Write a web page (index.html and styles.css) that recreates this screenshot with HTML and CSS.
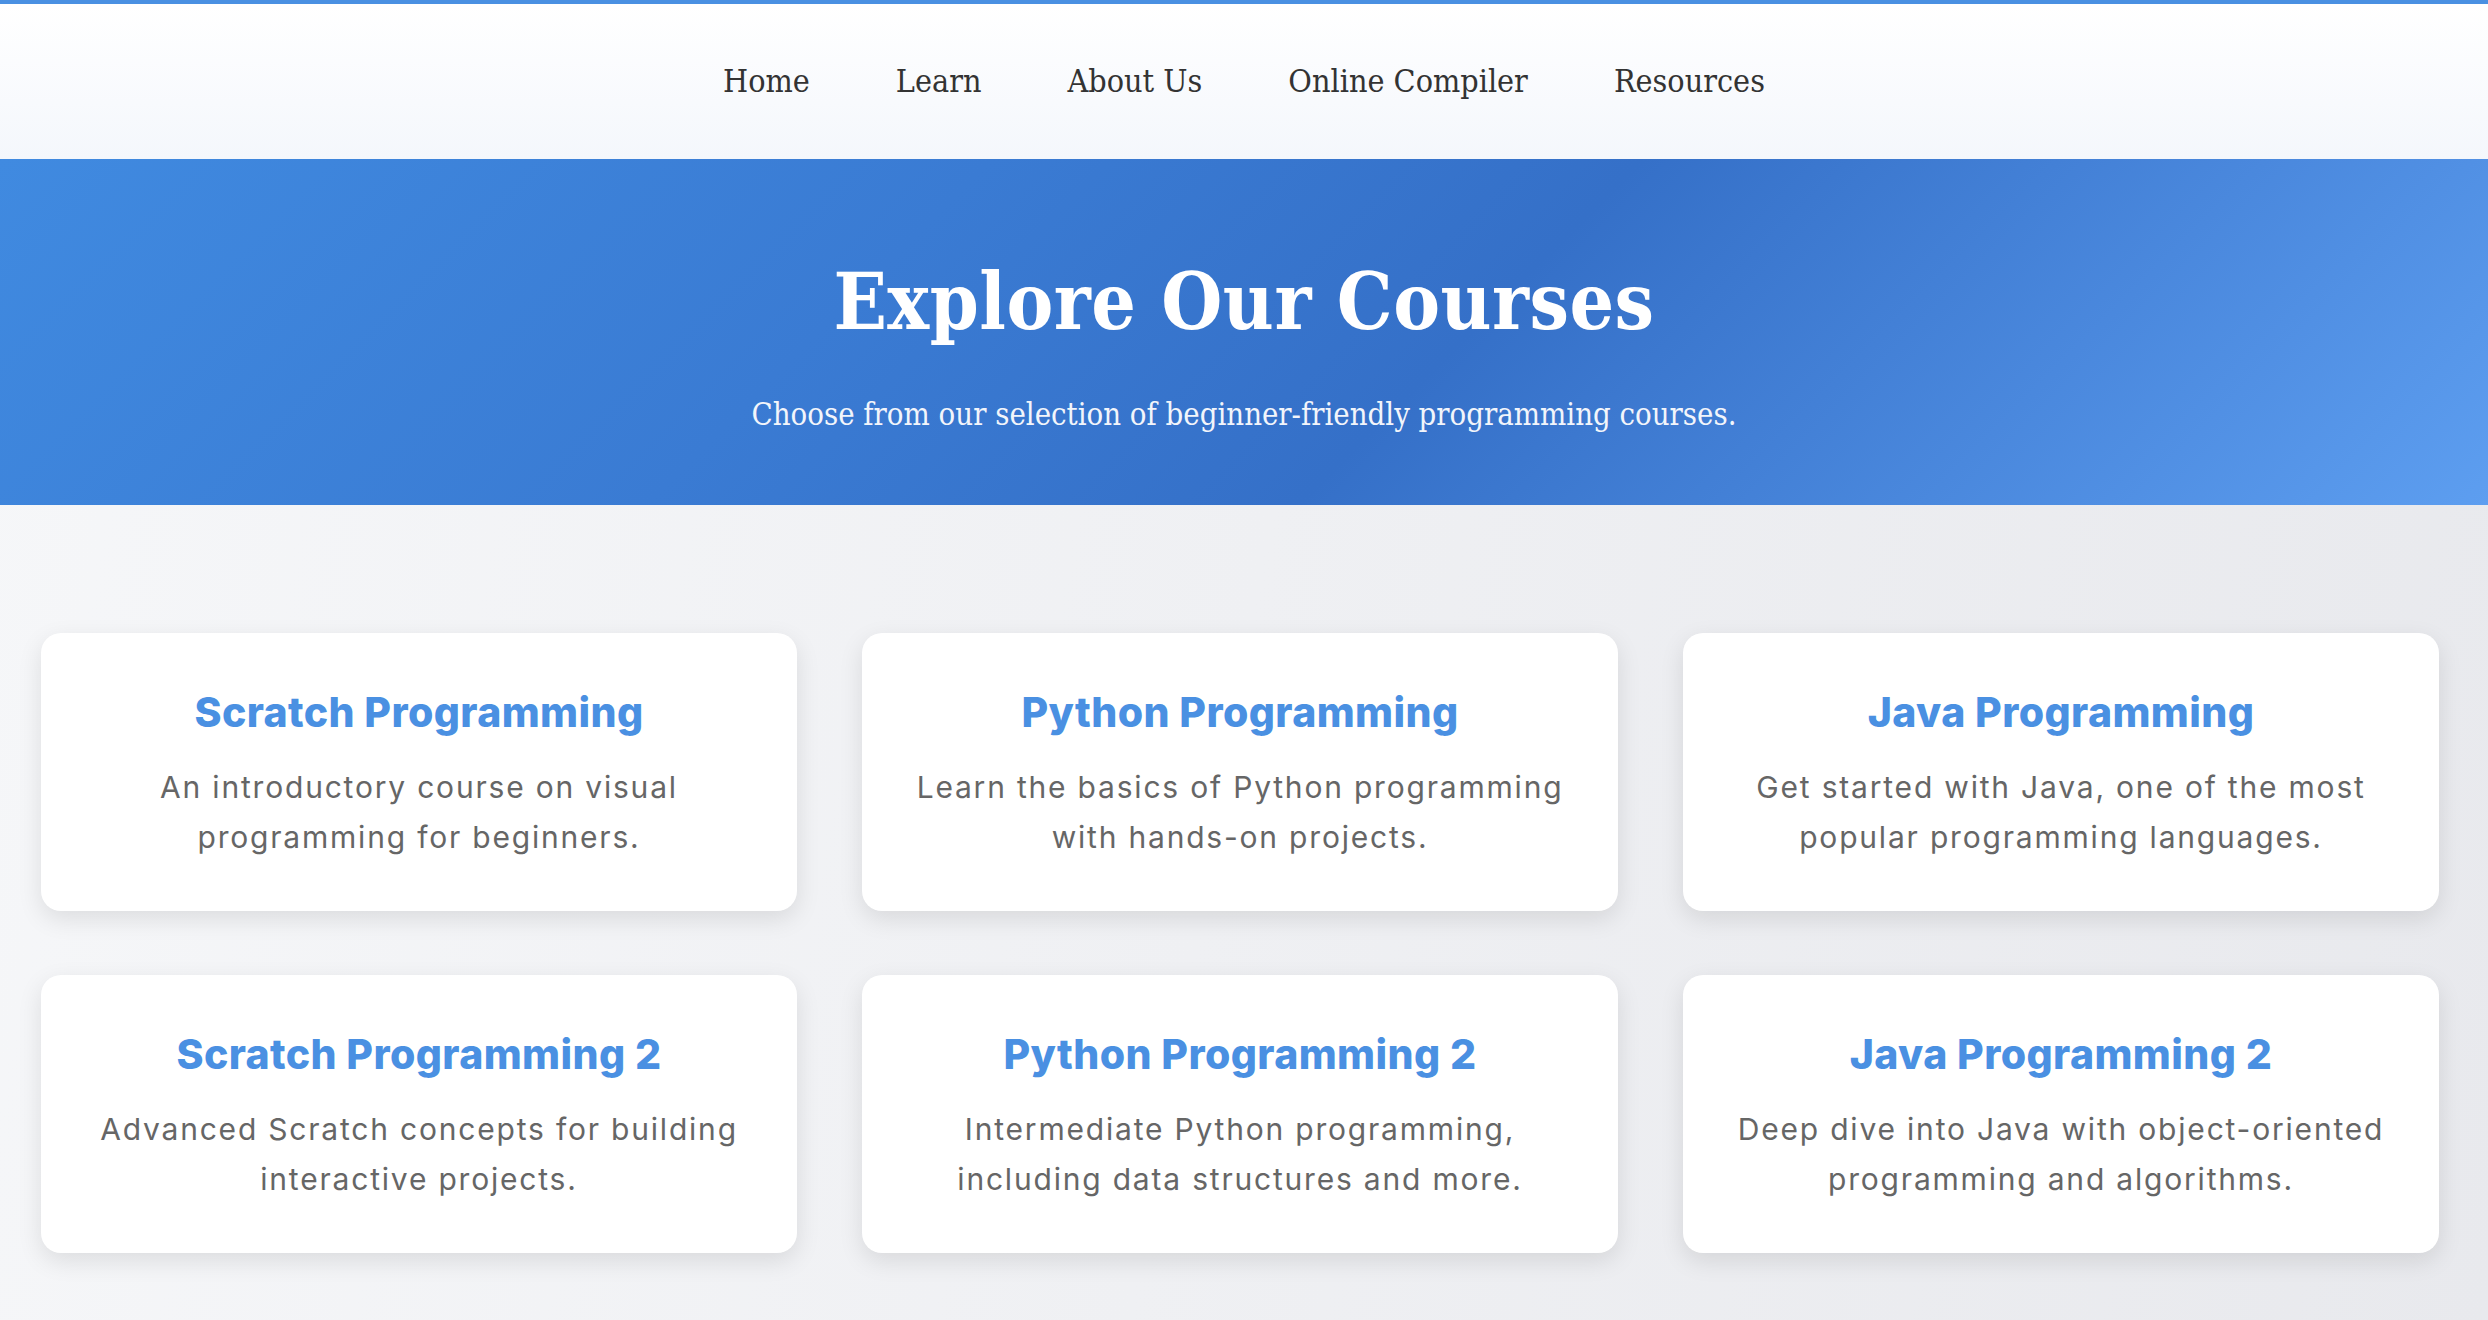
FILE: index.html
```html
<!DOCTYPE html>
<html lang="en">
<head>
<meta charset="utf-8">
<title>Explore Our Courses</title>
<link rel="stylesheet" href="styles.css">
</head>
<body>
<header class="site-header">
  <nav class="nav">
    <a class="nav-link" href="#">Home</a>
    <a class="nav-link" href="#">Learn</a>
    <a class="nav-link" href="#">About Us</a>
    <a class="nav-link" href="#">Online Compiler</a>
    <a class="nav-link" href="#">Resources</a>
  </nav>
</header>
<section class="hero">
  <h1 class="hero-title">Explore Our Courses</h1>
  <p class="hero-sub">Choose from our selection of beginner-friendly programming courses.</p>
</section>
<main class="courses">
  <div class="grid">
    <div class="card">
      <h2 class="card-title">Scratch Programming</h2>
      <p class="card-text">An introductory course on visual programming for beginners.</p>
    </div>
    <div class="card">
      <h2 class="card-title">Python Programming</h2>
      <p class="card-text">Learn the basics of Python programming with hands-on projects.</p>
    </div>
    <div class="card">
      <h2 class="card-title">Java Programming</h2>
      <p class="card-text">Get started with Java, one of the most popular programming languages.</p>
    </div>
    <div class="card">
      <h2 class="card-title">Scratch Programming 2</h2>
      <p class="card-text">Advanced Scratch concepts for building interactive projects.</p>
    </div>
    <div class="card">
      <h2 class="card-title">Python Programming 2</h2>
      <p class="card-text">Intermediate Python programming, including data structures and more.</p>
    </div>
    <div class="card">
      <h2 class="card-title">Java Programming 2</h2>
      <p class="card-text">Deep dive into Java with object-oriented programming and algorithms.</p>
    </div>
  </div>
</main>
</body>
</html>
```
FILE: styles.css
```css
html, body {
  margin: 0;
  padding: 0;
}
body {
  font-family: "DejaVu Serif Condensed", "DejaVu Serif", serif;
  font-stretch: condensed;
  background: linear-gradient(100deg, #f6f7f9, #e8e9ed);
  min-height: 1320px;
}
.site-header {
  border-top: 4px solid #4a90e2;
  background: linear-gradient(180deg, #ffffff 0%, #f4f7fc 100%);
  padding: 57px 0 58px;
}
.nav {
  display: flex;
  justify-content: center;
  gap: 86px;
  line-height: 40px;
}
.nav-link {
  font-size: 32px;
  color: #333333;
  text-decoration: none;
}
.hero {
  background: linear-gradient(135deg, #408ae0 0%, #3a7bd3 35%, #3570c8 58%, #4a88dd 80%, #5d9ef0 100%);
  color: #ffffff;
  text-align: center;
  padding: 97px 20px 68px;
}
.hero-title {
  margin: 0;
  font-size: 78px;
  line-height: 91px;
  font-weight: 700;
  letter-spacing: 0.5px;
}
.hero-sub {
  margin: 45px 0 0;
  font-size: 30.8px;
  line-height: 45px;
  color: #f2f5fb;
}
.courses {
  padding: 128px 49px 66px 41px;
}
.grid {
  display: grid;
  grid-template-columns: repeat(3, 1fr);
  column-gap: 65px;
  row-gap: 64px;
}
.card {
  background: #ffffff;
  border-radius: 20px;
  box-shadow: 0 8px 24px rgba(0, 0, 0, 0.1);
  text-align: center;
  padding: 55px 40px 49px;
  font-family: "Inter", "Open Sans", sans-serif;
  font-stretch: normal;
}
.card-title {
  margin: 0;
  font-size: 41px;
  line-height: 49px;
  font-weight: 800;
  letter-spacing: 0.4px;
  color: #4a90e2;
}
.card-text {
  margin: 25px 0 0;
  font-size: 30px;
  line-height: 50px;
  letter-spacing: 1.8px;
  color: #666666;
}
```
